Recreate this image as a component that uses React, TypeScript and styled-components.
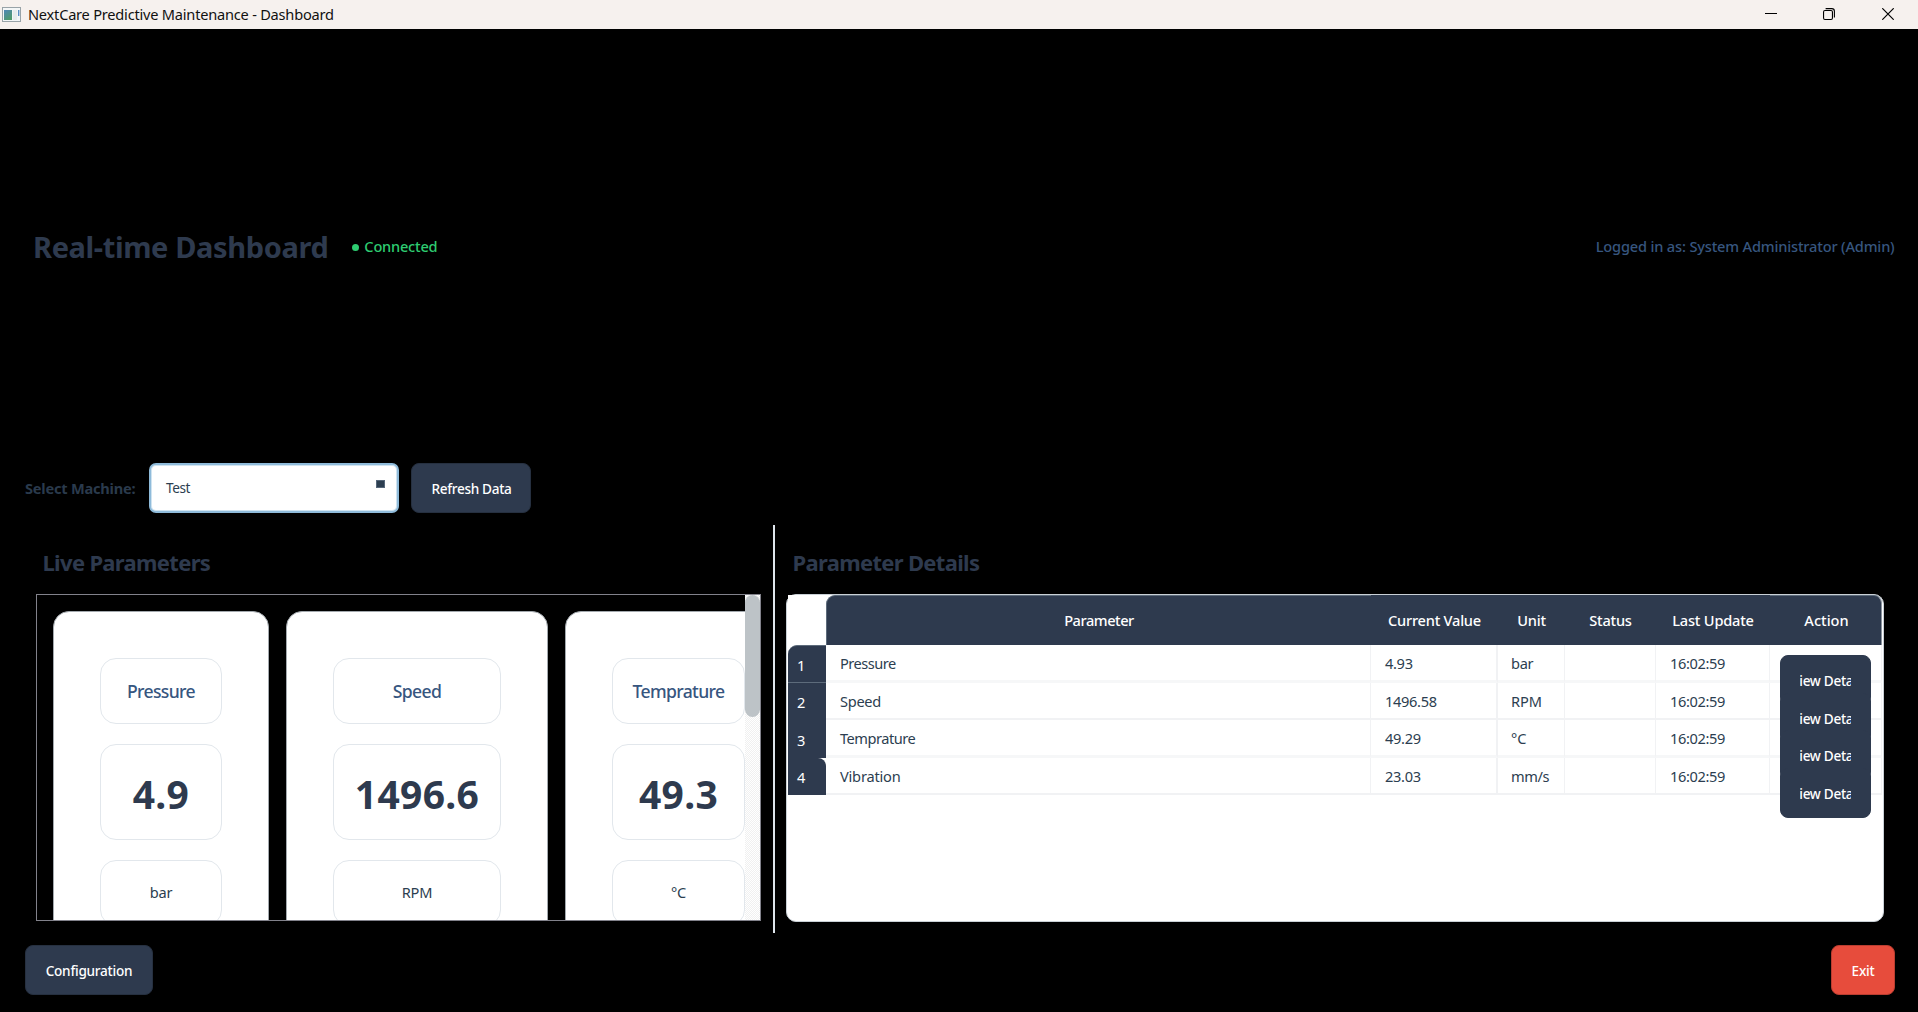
import React from 'react';
import styled, { createGlobalStyle } from 'styled-components';

const navy = '#2e3a4e';
const ink = '#2c3e50';
const steel = '#37567f';
const line = '#f1f2f4';

const GlobalStyle = createGlobalStyle`
  *, *::before, *::after { box-sizing: border-box; }
  body {
    margin: 0;
    background: #000;
    font-family: "Noto Sans", "Open Sans", sans-serif;
    font-size: 14.6px;
    color: ${ink};
    overflow: hidden;
  }
`;

const Window = styled.div`
  display: flex;
  flex-direction: column;
  width: 100%;
  height: 100vh;
  background: #000;
`;

const TitleBar = styled.header`
  display: flex;
  align-items: center;
  height: 29px;
  flex: none;
  padding: 0 24px 0 2px;
  background: #f6f1ee;
  color: #111;
`;

const WindowTitle = styled.span`
  flex: 1;
  margin-left: 6px;
  padding-bottom: 2px;
  letter-spacing: -0.22px;
`;

const WindowControls = styled.div`
  display: flex;
  gap: 46px 47px;
  padding-bottom: 1px;
  svg { display: block; }
  svg:nth-child(2) { margin-left: -1px; }
`;

const Heading = styled.section`
  display: flex;
  align-items: center;
  height: 434px;
  flex: none;
  padding: 0 23.5px 0 33px;
`;

const PageTitle = styled.h1`
  margin: 0;
  font-size: 29px;
  font-weight: 700;
  letter-spacing: -0.38px;
  color: ${navy};
`;

const Connection = styled.span`
  display: flex;
  align-items: center;
  gap: 5px;
  margin-left: 24px;
  font-weight: 500;
  letter-spacing: -0.22px;
  color: #2ecc71;
`;

const Dot = styled.i`
  width: 7px;
  height: 7px;
  margin-top: 3px;
  border-radius: 50%;
  background: #2ecc71;
`;

const UserInfo = styled.span`
  margin-left: auto;
  font-weight: 500;
  letter-spacing: -0.17px;
  color: ${steel};
`;

const Toolbar = styled.section`
  display: flex;
  align-items: center;
  height: 50px;
  flex: none;
  padding-left: 25px;
`;

const FieldLabel = styled.label`
  width: 124px;
  font-weight: 700;
  letter-spacing: -0.22px;
  color: #2a3a4c;
`;

const Combo = styled.div`
  display: flex;
  align-items: center;
  width: 250px;
  height: 50px;
  padding: 0 12px 1px 15px;
  border: 2px solid #8fbbda;
  border-radius: 7px;
  background: #fff;
  box-shadow: inset 0 0 0 1px #cfe3f0;
  font-size: 13.6px;
  letter-spacing: -0.4px;
`;

const ComboMark = styled.i`
  width: 9px;
  height: 8px;
  margin: 0 0 7px auto;
  border: 1px solid #56677a;
  background: ${ink};
`;

const Button = styled.button<{ $danger?: boolean; $width: number }>`
  width: ${(p) => p.$width}px;
  height: 50px;
  padding: 1px 0 0;
  border: 1px solid ${(p) => (p.$danger ? '#b93d30' : '#263040')};
  border-radius: 8px;
  background: ${(p) => (p.$danger ? '#e74c3c' : navy)};
  color: #fff;
  font-family: inherit;
  font-size: 13.6px;
  font-weight: 500;
  letter-spacing: -0.25px;
`;

const RefreshButton = styled(Button)`
  margin-left: 12px;
  padding: 0 0 0 1px;
  letter-spacing: -0.32px;
`;

const Splitter = styled.main`
  display: flex;
  height: 408px;
  margin-top: 12px;
  flex: none;
`;

const LivePane = styled.section`
  width: 773px;
  padding: 0 12px 12px 36px;
`;

const Handle = styled.div`
  width: 2px;
  background: #dfe6ec;
`;

const DetailsPane = styled.section`
  flex: 1;
  padding: 0 34px 11px 11px;
`;

const PaneTitle = styled.h2`
  display: flex;
  align-items: center;
  height: 69px;
  margin: 0;
  padding: 4px 0 0 6.5px;
  font-size: 22px;
  font-weight: 700;
  letter-spacing: -0.68px;
  color: ${navy};
`;

const ScrollArea = styled.div`
  display: flex;
  height: 327px;
  border: 1px solid #82828b;
`;

const Viewport = styled.div`
  display: flex;
  flex: 1;
  gap: 17px;
  min-width: 0;
  padding: 16px 0 0 16px;
  overflow: hidden;
`;

const ScrollTrack = styled.div`
  width: 15px;
  flex: none;
  background: repeating-conic-gradient(#f0f0f0 0 25%, #fff 0 50%) 0 0 / 2px 2px;
`;

const ScrollThumb = styled.div`
  height: 122px;
  border-radius: 7.5px;
  background: #bdc3c7;
`;

const Card = styled.article<{ $width: number }>`
  display: flex;
  flex-direction: column;
  gap: 20px;
  width: ${(p) => p.$width}px;
  height: 400px;
  flex: none;
  padding: 46px;
  border: 1px solid #a3a9ae;
  border-radius: 16px;
  background: #fff;
`;

const Tile = styled.div`
  display: flex;
  align-items: center;
  justify-content: center;
  height: 66px;
  flex: none;
  padding-bottom: 2px;
  border: 1px solid #e2e7ec;
  border-radius: 16px;
  letter-spacing: -0.15px;
`;

const NameTile = styled(Tile)`
  padding-bottom: 0;
  font-size: 17.6px;
  font-weight: 500;
  letter-spacing: -0.66px;
  color: ${steel};
`;

const ValueTile = styled(Tile)`
  height: 96px;
  padding: 3px 0 0;
  font-size: 39px;
  font-weight: 700;
  letter-spacing: 0.3px;
  color: ${navy};
`;

const Table = styled.div`
  position: relative;
  height: 328px;
  padding: 0 1px;
  border: 1px solid #c9d0d6;
  border-radius: 10px;
  background: #fff;
`;

const columns = '38px 545px 127px 67px 91px 114px 112px';

const HeaderRow = styled.div`
  display: grid;
  grid-template-columns: ${columns};
  height: 50px;
`;

const Corner = styled.div`
  background: #fff;
`;

const HeaderCell = styled.div<{ $spacing: number; $edge?: 'first' | 'last' }>`
  display: flex;
  align-items: center;
  justify-content: center;
  padding-bottom: 2px;
  padding-left: ${(p) => (p.$edge === 'last' ? 2 : 0)}px;
  border-top: 1px solid ${(p) => (p.$edge ? '#5d6b7b' : navy)};
  border-left: ${(p) => (p.$edge === 'first' ? '1px solid #5d6b7b' : '0')};
  border-right: ${(p) => (p.$edge === 'last' ? '1px solid #8b949f' : '0')};
  border-radius: ${(p) => (p.$edge === 'first' ? '9px 0 0 0' : p.$edge === 'last' ? '0 8px 0 0' : '0')};
  background: ${navy};
  color: #fff;
  font-weight: 500;
  letter-spacing: ${(p) => p.$spacing}px;
`;

const Row = styled.div<{ $tall: boolean }>`
  display: grid;
  grid-template-columns: ${columns};
  height: ${(p) => (p.$tall ? 38 : 37)}px;
`;

const RowNumber = styled.div<{ $pos: 'first' | 'middle' | 'last' }>`
  display: flex;
  align-items: center;
  padding: 1px 0 0 9px;
  border-top: ${(p) => (p.$pos === 'first' ? '1px solid #5d6b7b' : '0')};
  border-bottom: ${(p) => (p.$pos === 'first' ? '1px solid #5d6b7b' : '0')};
  border-radius: ${(p) => (p.$pos === 'first' ? '9px 0 0 0' : p.$pos === 'last' ? '0 8px 0 0' : '0')};
  background: ${navy};
  color: #fff;
`;

const Cell = styled.div<{ $tall: boolean; $spacing?: number; $divider?: number }>`
  position: relative;
  display: flex;
  align-items: center;
  padding: ${(p) => (p.$tall ? 1 : 0)}px 0 0 14px;
  border-bottom: ${(p) => (p.$tall ? '3px solid #f6f7f8' : `2px solid ${line}`)};
  border-right: ${(p) => p.$divider ?? 1}px solid ${line};
  letter-spacing: ${(p) => p.$spacing ?? 0}px;
`;

const UnitCell = styled(Cell)`
  padding-left: 13px;
`;

const ViewButton = styled.button`
  position: absolute;
  top: 10px;
  left: 10px;
  z-index: 1;
  width: 91px;
  height: 50px;
  padding: 0 19px;
  border: 1px solid ${navy};
  border-radius: 8px;
  background: ${navy};
  color: #fff;
  font-family: inherit;
  font-size: 13.6px;
  font-weight: 500;
  letter-spacing: -0.3px;
  text-align: left;
`;

const ViewLabel = styled.span`
  display: block;
  overflow: hidden;
  white-space: nowrap;
  text-indent: -8.8px;
`;

const Footer = styled.footer`
  display: flex;
  justify-content: space-between;
  margin-top: 12px;
  padding: 0 23px 0 25px;
`;

const cards = [
  { name: 'Pressure', value: '4.9', unit: 'bar', width: 216 },
  { name: 'Speed', value: '1496.6', unit: 'RPM', width: 262 },
  { name: 'Temprature', value: '49.3', unit: '°C', width: 227 },
];

const headers: { label: string; spacing: number; edge?: 'first' | 'last' }[] = [
  { label: 'Parameter', spacing: -0.46, edge: 'first' },
  { label: 'Current Value', spacing: -0.23 },
  { label: 'Unit', spacing: -0.2 },
  { label: 'Status', spacing: -0.22 },
  { label: 'Last Update', spacing: -0.2 },
  { label: 'Action', spacing: 0, edge: 'last' },
];

const rows = [
  { name: 'Pressure', spacing: -0.5, value: '4.93', unit: 'bar', unitSpacing: -0.3 },
  { name: 'Speed', spacing: -0.3, value: '1496.58', unit: 'RPM', unitSpacing: -0.05 },
  { name: 'Temprature', spacing: -0.48, value: '49.29', unit: '°C', unitSpacing: 0 },
  { name: 'Vibration', spacing: -0.2, value: '23.03', unit: 'mm/s', unitSpacing: -0.4 },
];

function AppIcon() {
  return (
    <svg width="20" height="16" viewBox="0 0 20 16">
      <defs>
        <linearGradient id="pane" x1="0" y1="0" x2="0.6" y2="1">
          <stop offset="0" stopColor="#4f86b8" />
          <stop offset="1" stopColor="#4f9a6c" />
        </linearGradient>
      </defs>
      <rect x="0.5" y="0.5" width="18" height="14" fill="#f3f6f7" stroke="#98a3a8" />
      <rect x="2" y="3" width="8" height="10" fill="url(#pane)" />
      <rect x="11" y="3" width="4" height="10" fill="#e6ebec" />
      <rect x="16" y="3" width="1.4" height="6" fill="#5b8fc4" />
    </svg>
  );
}

export default function App() {
  return (
    <Window>
      <GlobalStyle />
      <TitleBar>
        <AppIcon />
        <WindowTitle>NextCare Predictive Maintenance - Dashboard</WindowTitle>
        <WindowControls>
          <svg width="12" height="12" viewBox="0 0 12 12">
            <path d="M0 5.5H12" stroke="#000" />
          </svg>
          <svg width="12" height="12" viewBox="0 0 12 12" fill="none" stroke="#000" strokeWidth="1.1">
            <rect x="0.55" y="2.55" width="8.9" height="8.9" rx="1.4" />
            <path d="M2.6 0.6H8.8Q11.4 0.6 11.4 3.2V9.4" />
          </svg>
          <svg width="12" height="12" viewBox="0 0 12 12">
            <path d="M0.3 0.3L11.7 11.7M11.7 0.3L0.3 11.7" stroke="#000" strokeWidth="1.2" />
          </svg>
        </WindowControls>
      </TitleBar>

      <Heading>
        <PageTitle>Real-time Dashboard</PageTitle>
        <Connection>
          <Dot />
          Connected
        </Connection>
        <UserInfo>Logged in as: System Administrator (Admin)</UserInfo>
      </Heading>

      <Toolbar>
        <FieldLabel>Select Machine:</FieldLabel>
        <Combo>
          Test
          <ComboMark />
        </Combo>
        <RefreshButton $width={120}>Refresh Data</RefreshButton>
      </Toolbar>

      <Splitter>
        <LivePane>
          <PaneTitle>Live Parameters</PaneTitle>
          <ScrollArea>
            <Viewport>
              {cards.map((c) => (
                <Card key={c.name} $width={c.width}>
                  <NameTile>{c.name}</NameTile>
                  <ValueTile>{c.value}</ValueTile>
                  <Tile>{c.unit}</Tile>
                </Card>
              ))}
            </Viewport>
            <ScrollTrack>
              <ScrollThumb />
            </ScrollTrack>
          </ScrollArea>
        </LivePane>
        <Handle />
        <DetailsPane>
          <PaneTitle>Parameter Details</PaneTitle>
          <Table>
            <HeaderRow>
              <Corner />
              {headers.map((h) => (
                <HeaderCell key={h.label} $spacing={h.spacing} $edge={h.edge}>
                  {h.label}
                </HeaderCell>
              ))}
            </HeaderRow>
            {rows.map((r, i) => {
              const tall = i % 2 === 0;
              return (
                <Row key={r.name} $tall={tall}>
                  <RowNumber $pos={i === 0 ? 'first' : i === rows.length - 1 ? 'last' : 'middle'}>{i + 1}</RowNumber>
                  <Cell $tall={tall} $spacing={r.spacing}>{r.name}</Cell>
                  <Cell $tall={tall} $spacing={-0.32} $divider={2}>{r.value}</Cell>
                  <UnitCell $tall={tall} $spacing={r.unitSpacing}>{r.unit}</UnitCell>
                  <Cell $tall={tall} />
                  <Cell $tall={tall} $spacing={-0.36}>16:02:59</Cell>
                  <Cell $tall={tall}>
                    <ViewButton>
                      <ViewLabel>View Details</ViewLabel>
                    </ViewButton>
                  </Cell>
                </Row>
              );
            })}
          </Table>
        </DetailsPane>
      </Splitter>

      <Footer>
        <Button $width={128}>Configuration</Button>
        <Button $width={64} $danger>Exit</Button>
      </Footer>
    </Window>
  );
}
